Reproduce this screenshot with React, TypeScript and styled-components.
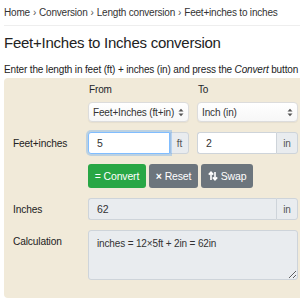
import styled, { createGlobalStyle } from 'styled-components';

const GlobalStyle = createGlobalStyle`
  html, body {
    margin: 0;
    padding: 0;
    overflow: hidden;
    background: #fff;
  }
  body {
    font-family: "Liberation Sans", Arial, sans-serif;
    color: #212529;
    letter-spacing: -0.15px;
  }
`;

const Page = styled.div`
  width: 304px;
  padding-left: 4px;
`;

const Breadcrumb = styled.nav`
  padding-top: 6px;
  font-size: 10px;
  letter-spacing: -0.2px;
  line-height: 14px;
  color: #333;
  white-space: nowrap;
  padding-bottom: 5px;
  border-bottom: 1px solid #eee;
`;

const Sep = styled.span`
  margin: 0 3px;
  color: #555;
`;

const Title = styled.h1`
  margin: 7px 0 0;
  font-size: 15px;
  letter-spacing: -0.25px;
  line-height: 20px;
  font-weight: 400;
  color: #222;
  white-space: nowrap;
`;

const Intro = styled.p`
  margin: 10px 0 0;
  font-size: 10px;
  line-height: 14px;
  white-space: nowrap;
  color: #222;
`;

const Panel = styled.form`
  margin-top: 1px;
  width: 310px;
  background: #f1ead9;
  border-radius: 4px;
  padding: 5px 9px 18px;
  box-sizing: border-box;
  display: grid;
  grid-template-columns: 75px 210px;
  row-gap: 10px;
  font-size: 10px;
`;

const Label = styled.div<{ $top?: boolean }>`
  align-self: ${({ $top }) => ($top ? 'start' : 'center')};
  padding-top: ${({ $top }) => ($top ? '6px' : '0')};
  color: #222;
  font-size: 10.2px;
`;

const Pair = styled.div`
  display: grid;
  grid-template-columns: minmax(0, 1fr) minmax(0, 1fr);
  column-gap: 8px;
`;

const Col = styled.div`
  display: flex;
  flex-direction: column;
  min-width: 0;
`;

const SmallHead = styled.div`
  line-height: 14px;
  margin-bottom: 5px;
  padding-left: 1px;
`;

const SelectWrap = styled.div`
  position: relative;
  height: 20px;
`;

const Select = styled.select`
  appearance: none;
  -webkit-appearance: none;
  width: 100%;
  height: 20px;
  box-sizing: border-box;
  border: 1px solid #dcdcdc;
  border-radius: 4px;
  background: linear-gradient(#fff, #f7f7f7);
  font-family: inherit;
  font-size: 10px;
  letter-spacing: -0.15px;
  color: #333;
  padding: 0 4px;
  box-shadow: 0 1px 1px rgba(0, 0, 0, 0.05);
`;

const Caret = styled.svg`
  position: absolute;
  right: 5px;
  top: 6px;
  pointer-events: none;
`;

const Group = styled.div`
  display: flex;
  height: 22px;
  min-width: 0;
`;

const Input = styled.input<{ $focused?: boolean; $readOnly?: boolean }>`
  flex: 1;
  min-width: 0;
  width: 0;
  box-sizing: border-box;
  height: 100%;
  border: 1px solid ${({ $focused }) => ($focused ? '#80bdff' : '#ced4da')};
  border-right: ${({ $focused }) => ($focused ? '1px solid #80bdff' : 'none')};
  border-radius: 3px 0 0 3px;
  background: ${({ $readOnly }) => ($readOnly ? '#e9ecef' : '#fff')};
  box-shadow: ${({ $focused }) => ($focused ? '0 0 0 2px rgba(0,123,255,0.22)' : 'none')};
  padding: 0 8px;
  font-family: inherit;
  font-size: 10.5px;
  color: #333;
  outline: none;
  position: relative;
  z-index: ${({ $focused }) => ($focused ? 1 : 0)};
`;

const Addon = styled.span<{ $w: number }>`
  width: ${({ $w }) => $w}px;
  flex: none;
  box-sizing: border-box;
  display: flex;
  align-items: center;
  justify-content: center;
  background: #e9ecef;
  border: 1px solid #ced4da;
  border-radius: 0 3px 3px 0;
  color: #555;
  font-size: 10px;
`;

const Buttons = styled.div`
  display: flex;
  gap: 3px;
`;

const Button = styled.button<{ $variant: 'success' | 'secondary'; $w: number }>`
  width: ${({ $w }) => $w}px;
  height: 24px;
  border: none;
  border-radius: 3px;
  background: ${({ $variant }) => ($variant === 'success' ? '#28a745' : '#6c757d')};
  color: #fff;
  font-family: inherit;
  font-size: 10.5px;
  letter-spacing: -0.15px;
  display: flex;
  align-items: center;
  justify-content: center;
  gap: 3px;
  padding: 0;
`;

const Bold = styled.b`
  font-weight: 700;
`;

const TextArea = styled.textarea`
  height: 50px;
  box-sizing: border-box;
  border: 1px solid #ced4da;
  border-radius: 3px;
  background: #e9ecef;
  padding: 7px 8px;
  font-family: inherit;
  font-size: 10px;
  letter-spacing: -0.15px;
  color: #333;
  resize: vertical;
`;

function SelectCaret() {
  return (
    <Caret width="6" height="9" viewBox="0 0 6 9">
      <path d="M0.5 3.5 L3 0.8 L5.5 3.5 Z" fill="#555" />
      <path d="M0.5 5.5 L3 8.2 L5.5 5.5 Z" fill="#555" />
    </Caret>
  );
}

function SwapIcon() {
  return (
    <svg width="10" height="10" viewBox="0 0 10 10">
      <path d="M3 9 V1.5 M0.8 3.6 L3 1.2 L5.2 3.6" stroke="#fff" strokeWidth="1.6" fill="none" />
      <path d="M7 1 V8.5 M4.8 6.4 L7 8.8 L9.2 6.4" stroke="#fff" strokeWidth="1.6" fill="none" />
    </svg>
  );
}

export default function App() {
  return (
    <>
      <GlobalStyle />
      <Page>
        <Breadcrumb>
          Home<Sep>›</Sep>Conversion<Sep>›</Sep>Length conversion<Sep>›</Sep>Feet+inches to inches
        </Breadcrumb>
        <Title>Feet+Inches to Inches conversion</Title>
        <Intro>
          Enter the length in feet (ft) + inches (in) and press the <i>Convert</i> button
        </Intro>
        <Panel onSubmit={e => e.preventDefault()}>
          <div />
          <Pair>
            <Col>
              <SmallHead>From</SmallHead>
              <SelectWrap>
                <Select defaultValue="ftin">
                  <option value="ftin">Feet+Inches (ft+in)</option>
                </Select>
                <SelectCaret />
              </SelectWrap>
            </Col>
            <Col>
              <SmallHead>To</SmallHead>
              <SelectWrap>
                <Select defaultValue="in">
                  <option value="in">Inch (in)</option>
                </Select>
                <SelectCaret />
              </SelectWrap>
            </Col>
          </Pair>

          <Label>Feet+inches</Label>
          <Pair>
            <Group>
              <Input $focused defaultValue="5" />
              <Addon $w={19}>ft</Addon>
            </Group>
            <Group>
              <Input defaultValue="2" />
              <Addon $w={22}>in</Addon>
            </Group>
          </Pair>

          <div />
          <Buttons>
            <Button type="button" $variant="success" $w={58}>
              = Convert
            </Button>
            <Button type="button" $variant="secondary" $w={49}>
              <Bold>×</Bold> Reset
            </Button>
            <Button type="button" $variant="secondary" $w={52}>
              <SwapIcon /> Swap
            </Button>
          </Buttons>

          <Label>Inches</Label>
          <Group>
            <Input $readOnly readOnly defaultValue="62" />
            <Addon $w={22}>in</Addon>
          </Group>

          <Label $top>Calculation</Label>
          <TextArea readOnly defaultValue="inches = 12×5ft + 2in = 62in" />
        </Panel>
      </Page>
    </>
  );
}
